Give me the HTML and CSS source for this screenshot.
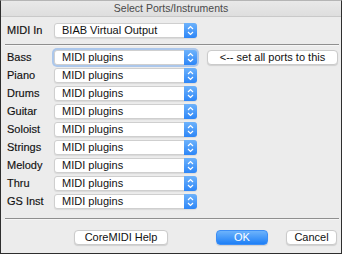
FILE: index.html
```html
<!DOCTYPE html>
<html lang="en">
<head>
    <meta charset="UTF-8">
    <meta name="viewport" content="width=device-width, initial-scale=1.0">
    <title>Select Ports/Instruments</title>
    <link rel="stylesheet" href="styles.css">
</head>
<body>
    <div class="window">
        <div class="titlebar">Select Ports/Instruments</div>

        <div class="content">
            <div class="row midi-in">
                <span class="label">MIDI In</span>
                <div class="select">
                    <span class="value">BIAB Virtual Output</span>
                    <span class="arrows"><svg width="13" height="15" viewBox="0 0 13 15"><path d="M4 6 L6.5 3.5 L9 6 M4 9 L6.5 11.5 L9 9" fill="none" stroke="#fff" stroke-width="1.2"/></svg></span>
                </div>
            </div>

            <div class="separator"></div>

            <!-- ports -->
            <div class="ports">
                <span class="label">Bass</span>
                <div class="select focused">
                    <span class="value">MIDI plugins</span>
                    <span class="arrows"><svg width="13" height="15" viewBox="0 0 13 15"><path d="M4 6 L6.5 3.5 L9 6 M4 9 L6.5 11.5 L9 9" fill="none" stroke="#fff" stroke-width="1.2"/></svg></span>
                </div>
                <button class="btn set-all">&lt;-- set all ports to this</button>

                <span class="label">Piano</span>
                <div class="select">
                    <span class="value">MIDI plugins</span>
                    <span class="arrows"><svg width="13" height="15" viewBox="0 0 13 15"><path d="M4 6 L6.5 3.5 L9 6 M4 9 L6.5 11.5 L9 9" fill="none" stroke="#fff" stroke-width="1.2"/></svg></span>
                </div>
                <span></span>

                <span class="label">Drums</span>
                <div class="select">
                    <span class="value">MIDI plugins</span>
                    <span class="arrows"><svg width="13" height="15" viewBox="0 0 13 15"><path d="M4 6 L6.5 3.5 L9 6 M4 9 L6.5 11.5 L9 9" fill="none" stroke="#fff" stroke-width="1.2"/></svg></span>
                </div>
                <span></span>

                <span class="label">Guitar</span>
                <div class="select">
                    <span class="value">MIDI plugins</span>
                    <span class="arrows"><svg width="13" height="15" viewBox="0 0 13 15"><path d="M4 6 L6.5 3.5 L9 6 M4 9 L6.5 11.5 L9 9" fill="none" stroke="#fff" stroke-width="1.2"/></svg></span>
                </div>
                <span></span>

                <span class="label">Soloist</span>
                <div class="select">
                    <span class="value">MIDI plugins</span>
                    <span class="arrows"><svg width="13" height="15" viewBox="0 0 13 15"><path d="M4 6 L6.5 3.5 L9 6 M4 9 L6.5 11.5 L9 9" fill="none" stroke="#fff" stroke-width="1.2"/></svg></span>
                </div>
                <span></span>

                <span class="label">Strings</span>
                <div class="select">
                    <span class="value">MIDI plugins</span>
                    <span class="arrows"><svg width="13" height="15" viewBox="0 0 13 15"><path d="M4 6 L6.5 3.5 L9 6 M4 9 L6.5 11.5 L9 9" fill="none" stroke="#fff" stroke-width="1.2"/></svg></span>
                </div>
                <span></span>

                <span class="label">Melody</span>
                <div class="select">
                    <span class="value">MIDI plugins</span>
                    <span class="arrows"><svg width="13" height="15" viewBox="0 0 13 15"><path d="M4 6 L6.5 3.5 L9 6 M4 9 L6.5 11.5 L9 9" fill="none" stroke="#fff" stroke-width="1.2"/></svg></span>
                </div>
                <span></span>

                <span class="label">Thru</span>
                <div class="select">
                    <span class="value">MIDI plugins</span>
                    <span class="arrows"><svg width="13" height="15" viewBox="0 0 13 15"><path d="M4 6 L6.5 3.5 L9 6 M4 9 L6.5 11.5 L9 9" fill="none" stroke="#fff" stroke-width="1.2"/></svg></span>
                </div>
                <span></span>

                <span class="label">GS Inst</span>
                <div class="select">
                    <span class="value">MIDI plugins</span>
                    <span class="arrows"><svg width="13" height="15" viewBox="0 0 13 15"><path d="M4 6 L6.5 3.5 L9 6 M4 9 L6.5 11.5 L9 9" fill="none" stroke="#fff" stroke-width="1.2"/></svg></span>
                </div>
                <span></span>
            </div>

            <div class="separator bottom"></div>

            <div class="buttons">
                <button class="btn help">CoreMIDI Help</button>
                <button class="btn ok">OK</button>
                <button class="btn cancel">Cancel</button>
            </div>
        </div>
    </div>
</body>
</html>
```

FILE: styles.css
```css
body {
    margin: 0;
    font-family: "Liberation Sans", Arial, sans-serif;
    font-size: 11px;
    color: #111;
}
.window {
    width: 342px;
    height: 254px;
    box-sizing: border-box;
    border: 1px solid #2e2e2e;
    border-top-color: #b5b5b5;
    background-color: #ececec;
}
.titlebar {
    height: 15px;
    line-height: 15px;
    text-align: center;
    font-size: 10.5px;
    color: #4a4a4a;
    background: linear-gradient(#e9e9e9, #dedede);
    border-bottom: 1px solid #c9c9c9;
}
.content {
    padding: 0 2px 0 4px;
}
.row {
    display: flex;
    align-items: center;
    padding-left: 2px;
}
.midi-in {
    margin-top: 6px;
}
.label {
    width: 47px;
    line-height: 15px;
    -webkit-text-stroke: 0.15px #111;
}
.select {
    width: 143px;
    height: 15px;
    box-sizing: border-box;
    display: flex;
    align-items: center;
    background: #fff;
    border: 1px solid #cfcfcf;
    border-radius: 3px;
    box-shadow: 0 1px 1px rgba(0, 0, 0, 0.08);
}
.select.focused {
    box-shadow: 0 0 0 2px rgba(120, 170, 235, 0.55);
}
.value {
    flex: 1;
    padding-left: 7px;
    line-height: 13px;
}
.arrows {
    width: 13px;
    height: 15px;
    margin: -1px -1px -1px 0;
    border-radius: 0 3px 3px 0;
    background: linear-gradient(#6db2fb, #2d86f7);
}
.arrows svg {
    display: block;
}
.separator {
    height: 1px;
    margin-top: 6px;
    background-color: #8f8f8f;
    border-bottom: 1px solid #f6f6f6;
}
.ports {
    display: grid;
    grid-template-columns: 47px 143px 131px;
    grid-auto-rows: 15px;
    row-gap: 3px;
    margin-top: 4px;
    padding-left: 2px;
    align-items: center;
}
.btn {
    height: 15px;
    padding: 0;
    font-family: "Liberation Sans", Arial, sans-serif;
    font-size: 11px;
    line-height: 13px;
    color: #111;
    background: #fff;
    border: 1px solid #cbcbcb;
    border-radius: 4px;
    box-shadow: 0 1px 1px rgba(0, 0, 0, 0.12);
}
.set-all {
    width: 131px;
    margin-left: 10px;
}
.separator.bottom {
    margin-top: 9px;
}
.buttons {
    display: flex;
    justify-content: flex-end;
    margin-top: 10px;
    padding-right: 2px;
}
.help {
    width: 94px;
    margin-right: 48px;
}
.ok {
    width: 52px;
    margin-right: 18px;
    color: #fff;
    border-color: #3d8ef5;
    background: linear-gradient(#6db3fb, #1e7ff6);
}
.cancel {
    width: 51px;
}
```
